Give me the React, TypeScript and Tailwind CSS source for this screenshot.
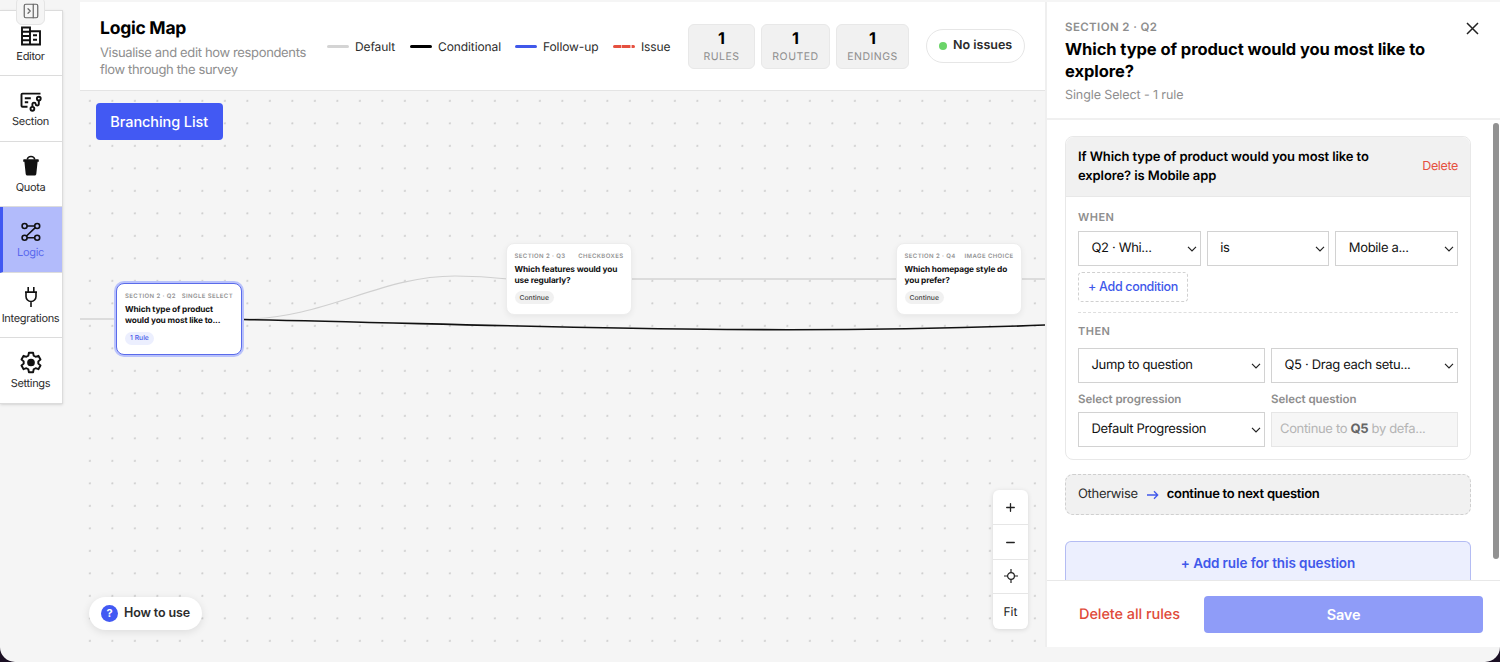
import { Minus, PanelRightClose, Plus } from "lucide-react";
import type { ReactNode } from "react";

function EditorIcon() {
  return (
    <svg width="22" height="20" viewBox="0 0 22 20" fill="none" stroke="#111" strokeWidth="1.9">
      <path d="M2 1.5h8v17H2zM10 5.2h10v13.3H10M2 5.8h8M2 10h8M2 14.2h8" />
      <path d="M13 9.3h4M13 13.7h4" />
    </svg>
  );
}

function SectionIcon() {
  return (
    <svg className="mt-[2px]" width="22" height="20" viewBox="0 0 22 20" fill="none" stroke="#111" strokeWidth="1.9">
      <path d="M20.5 1.6H2.5c-.6 0-1 .4-1 1v11.2c0 .6.4 1 1 1h5" />
      <path d="M4.8 6.2h6M4.8 10.2h3.4" />
      <circle cx="18.8" cy="6.6" r="1.9" />
      <circle cx="12.4" cy="16.8" r="1.9" />
      <path d="M12.4 14.9v-2.7c0-1 .6-1.6 1.6-1.6s1.6.6 1.6 1.5c0 .9.6 1.4 1.5 1.4 1 0 1.7-.6 1.7-1.5V8.6" />
    </svg>
  );
}

function QuotaIcon() {
  return (
    <svg width="18" height="22" viewBox="0 0 18 22" fill="#111">
      <path d="M1.2 5.300C1.200 4.700 1.600 4.300 2.200 4.300h13.600c.6 0 1 .4 1 1v1.500H15.600L14.300 19c-.1.900-.8 1.500-1.700 1.500H5.400c-.9 0-1.600-.6-1.700-1.500L2.400 6.800H1.200z" />
      <path d="M5.200 4.500C5.600 2.500 7 1.500 9 1.500s3.400 1 3.800 3" fill="none" stroke="#111" strokeWidth="1.400" />
    </svg>
  );
}

function LogicIcon() {
  return (
    <svg width="22" height="20" viewBox="0 0 22 20" fill="none" stroke="#111" strokeWidth="1.600">
      <circle cx="4.600" cy="4" r="2.500" />
      <circle cx="17.200" cy="4" r="2.500" />
      <circle cx="4.600" cy="15.800" r="2.500" />
      <circle cx="17.200" cy="15.800" r="2.500" />
      <path d="M7 4h7.700M7 15.800h7.700M15.300 5.700 6.500 14" />
    </svg>
  );
}

function PlugIcon() {
  return (
    <svg width="16" height="22" viewBox="0 0 16 22" fill="none" stroke="#111" strokeWidth="1.600">
      <path d="M5.200 1v5M10.800 1v5M2 6.100h12M3 6.100v4.400a5 5 0 0 0 10 0V6.100M8 15.500V21" />
    </svg>
  );
}

function GearIcon() {
  return (
    <svg width="24" height="24" viewBox="0 0 24 24" fill="none" stroke="#111" strokeWidth="1.900" strokeLinejoin="round">
      <path d="M9.900 2.800h4.200l.6 2.900 1.900 1.100 2.800-1 2.100 3.700-2.200 1.900v2.200l2.200 1.900-2.100 3.700-2.800-1-1.900 1.100-.6 2.900H9.900l-.6-2.900-1.900-1.100-2.800 1-2.100-3.700 2.200-1.900v-2.200L2.500 9.500l2.100-3.700 2.800 1 1.900-1.100z" />
      <circle cx="12" cy="12.500" r="2.900" fill="#111" />
    </svg>
  );
}

const NAV = [
  { label: "Editor", icon: <EditorIcon /> },
  { label: "Section", icon: <SectionIcon /> },
  { label: "Quota", icon: <QuotaIcon /> },
  { label: "Logic", icon: <LogicIcon />, active: true },
  { label: "Integrations", icon: <PlugIcon /> },
  { label: "Settings", icon: <GearIcon /> },
];

function Sidebar() {
  return (
    <aside className="relative w-20 shrink-0 pt-[10px]">
      <nav className="w-[63px] border-t border-r border-b border-[#dcdcdc] bg-white shadow-sm">
        {NAV.map((item) => (
          <div
            key={item.label}
            className={
              item.active
                ? "flex h-[65.4px] flex-col items-center border-b border-l-[3px] border-b-[#dcdcdc] border-l-[#4058f2] bg-[#b2bbfb] pr-[4px] text-[#5a69ee]"
                : "flex h-[65.4px] flex-col items-center border-b border-[#dcdcdc] pr-px text-[#2c2c2c] last:border-b-0"
            }
          >
            <div className="mt-[12.5px] flex h-6 items-center justify-center">{item.icon}</div>
            <span className="mt-[0.5px] text-[11px] leading-4 tracking-[-0.33px]">{item.label}</span>
          </div>
        ))}
      </nav>
      <div className="absolute top-[-3px] left-4 flex h-7 w-[29px] items-center justify-center rounded-md border border-[#e4e4e4] bg-[#f5f5f5]">
        <PanelRightClose size={18} strokeWidth={1.6} className="text-[#666]" />
      </div>
    </aside>
  );
}

function LegendItem({ line, label, width }: { line: string; label: string; width: string }) {
  return (
    <div className={`flex items-center gap-[6px] ${width}`}>
      <span className={line} />
      <span className="pt-px">{label}</span>
    </div>
  );
}

function Stat({ width, label }: { width: string; label: string }) {
  return (
    <div className={`flex h-[45px] flex-col items-center rounded-md border border-[#e8e8e8] bg-[#f1f1f1] pt-[4px] ${width}`}>
      <span className="text-[16px] leading-[18px] font-bold text-black">1</span>
      <span className="mt-[2px] text-[10.5px] leading-[15px] tracking-[0.5px] text-[#8e8e8e]">{label}</span>
    </div>
  );
}

function Header() {
  return (
    <header className="flex h-[89px] border-b border-[#e4e4e4] bg-white pl-5">
      <div className="w-[227px] shrink-0 pt-[15px]">
        <h1 className="text-[17.5px] leading-[24px] font-bold tracking-[-0.25px] text-black">Logic Map</h1>
        <p className="mt-[4px] text-[13px] leading-[16.5px] tracking-[-0.35px] whitespace-nowrap text-[#8e8e8e]">
          Visualise and edit how respondents
          <br />
          flow through the survey
        </p>
      </div>
      <div className="flex h-[88px] w-[361px] shrink-0 items-center text-[12px] tracking-[-0.1px] whitespace-nowrap text-[#2c2c2c]">
        <LegendItem width="w-[83px]" line="h-[3px] w-[22px] rounded-full bg-[#d4d4d4]" label="Default" />
        <LegendItem width="w-[105px]" line="h-[3px] w-[22px] rounded-full bg-black" label="Conditional" />
        <LegendItem width="w-[98px]" line="h-[3px] w-[22px] rounded-full bg-[#4058ea]" label="Follow-up" />
        <LegendItem
          width="w-[60px]"
          line="h-[3px] w-[22px] rounded-full bg-[repeating-linear-gradient(90deg,#e5503f_0_8px,#f5b5ae_8px_9.5px)]"
          label="Issue"
        />
      </div>
      <div className="flex h-[88px] items-center gap-[6px]">
        <Stat width="w-[67px]" label="RULES" />
        <Stat width="w-[69px]" label="ROUTED" />
        <Stat width="w-[73px]" label="ENDINGS" />
      </div>
      <div className="mt-[27px] ml-[17px] flex h-[34px] w-[99px] items-center gap-[6px] rounded-full border border-[#e6e6e6] pl-3 whitespace-nowrap">
        <span className="size-2 rounded-full bg-[#6ad468]" />
        <span className="pt-px text-[12.5px] font-semibold text-[#2c2c2c]">No issues</span>
      </div>
    </header>
  );
}

type NodeProps = {
  position: string;
  section: string;
  kind: string;
  title: ReactNode;
  tag: string;
  selected?: boolean;
};

function MapNode({ position, section, kind, title, tag, selected }: NodeProps) {
  return (
    <div
      className={
        selected
          ? `absolute rounded-lg border-[1.5px] border-[#5a6bea] bg-white px-[8px] pt-[9px] ring-2 ring-[#b9c2fb] ${position}`
          : `absolute rounded-lg border border-[#ededed] bg-white px-[7.5px] pt-[8.5px] shadow-[0_2px_6px_rgba(0,0,0,0.06)] ${position}`
      }
    >
      <div className="flex justify-between text-[6px] leading-[8px] font-semibold tracking-[0.4px] whitespace-nowrap text-[#929292]">
        <span>{section}</span>
        <span>{kind}</span>
      </div>
      <p className="mt-[4px] text-[8.3px] leading-[11px] font-bold tracking-[-0.12px] whitespace-nowrap text-[#111]">{title}</p>
      <span
        className={
          selected
            ? "mt-[4.5px] flex h-[13px] w-fit items-center rounded-full bg-[#eceffe] px-[5px] pt-px text-[6.8px] font-medium text-[#4a5ce8]"
            : "mt-[4.5px] flex h-[13px] w-fit items-center rounded-full bg-[#f1f1f1] px-[5px] pt-px text-[6.8px] font-medium text-[#444]"
        }
      >
        {tag}
      </span>
    </div>
  );
}

function LocateIcon() {
  return (
    <svg width="16" height="16" viewBox="0 0 16 16" fill="none" stroke="#222" strokeWidth="1.2">
      <circle cx="8" cy="8" r="3.4" />
      <path d="M8 1v3.600M8 11.400V15M1 8h3.600M11.400 8H15" />
    </svg>
  );
}

function Canvas() {
  return (
    <div className="relative h-[556px] overflow-hidden bg-[radial-gradient(circle_at_10px_10px,#cfcfcf_0.8px,transparent_1.3px)] bg-[length:22.5px_22.5px]">
      <svg className="absolute top-0 left-0" width="966" height="556" fill="none">
        <path d="M0 228h37M551 188h266M941 188h25" stroke="#d4d4d4" strokeWidth="1.4" />
        <path d="M163 228C245 228 300 185 375 185c20 0 35 1 53 3" stroke="#d0d0d0" strokeWidth="1.2" />
        <path d="M163 228.500C440 234 680 245 966 234" stroke="#111" strokeWidth="1.6" />
      </svg>

      <MapNode
        position="top-[192px] left-[36px] h-[72px] w-[126px]"
        section="SECTION 2 · Q2"
        kind="SINGLE SELECT"
        title={<>Which type of product<br />would you most like to...</>}
        tag="1 Rule"
        selected
      />
      <MapNode
        position="top-[152px] left-[426px] h-[72px] w-[126px]"
        section="SECTION 2 · Q3"
        kind="CHECKBOXES"
        title={<>Which features would you<br />use regularly?</>}
        tag="Continue"
      />
      <MapNode
        position="top-[152px] left-[816px] h-[72px] w-[126px]"
        section="SECTION 2 · Q4"
        kind="IMAGE CHOICE"
        title={<>Which homepage style do<br />you prefer?</>}
        tag="Continue"
      />

      <button className="absolute top-[12px] left-4 h-[37px] w-[126.5px] rounded bg-[#4259f3] text-[14.5px] font-medium tracking-[-0.08px] whitespace-nowrap text-white">
        Branching List
      </button>

      <button className="absolute top-[506px] left-[9px] flex h-[33px] w-[113px] items-center gap-[6px] rounded-full bg-white pl-3 text-[12.5px] font-semibold tracking-[-0.13px] whitespace-nowrap text-[#2c2c2c] shadow-[0_2px_8px_rgba(0,0,0,0.1)]">
        <span className="flex size-[17px] items-center justify-center rounded-full bg-[#4259f3] text-[11px] font-bold text-white">?</span>
        How to use
      </button>

      <div className="absolute top-[399px] left-[913px] grid h-[139px] w-[35px] grid-rows-4 divide-y divide-[#e6e6e6] rounded-md bg-white text-[#222] shadow-[0_1px_5px_rgba(0,0,0,0.12)]">
        <div className="flex items-center justify-center pt-[2px]"><Plus size={13} strokeWidth={2.4} /></div>
        <div className="flex items-center justify-center pt-[2px]"><Minus size={13} strokeWidth={2.4} /></div>
        <div className="flex items-center justify-center"><LocateIcon /></div>
        <div className="flex items-center justify-center text-[12px]">Fit</div>
      </div>
    </div>
  );
}

function SelectBox({ value }: { value: string }) {
  return (
    <div className="flex h-[35px] min-w-0 items-center justify-between border border-[#d2d2d2] bg-white pr-[3px] pl-[12.5px] text-[13px] tracking-[-0.34px] whitespace-nowrap text-[#111]">
      <span className="pt-px">{value}</span>
      <svg width="10" height="6" viewBox="0 0 10 6" fill="none" stroke="#222" strokeWidth="1.200">
        <path d="M1 .8l4 4 4-4" />
      </svg>
    </div>
  );
}

function RuleCard() {
  return (
    <section className="h-[324px] w-[406px] rounded-lg border border-[#e8e8e8] bg-white">
      <div className="flex h-[60px] items-center justify-between rounded-t-lg border-b border-[#e8e8e8] bg-[#f1f1f1] px-3 pt-px">
        <p className="w-[310px] text-[13px] leading-[19.5px] font-semibold tracking-[-0.1px] text-black">
          If Which type of product would you most like to explore? is Mobile app
        </p>
        <span className="pt-px text-[12.5px] tracking-[-0.35px] text-[#e5503f]">Delete</span>
      </div>
      <div className="px-3 pt-[13px]">
        <h3 className="text-[11px] leading-[14px] font-semibold tracking-[0.5px] text-[#8e8e8e]">WHEN</h3>
        <div className="mt-[7px] grid grid-cols-3 gap-[6px]">
          <SelectBox value="Q2 · Whi..." />
          <SelectBox value="is" />
          <SelectBox value="Mobile a..." />
        </div>
        <button className="mt-[6px] flex h-[30px] w-[110px] items-center justify-center rounded border border-dashed border-[#d0d0d0] pt-px text-[12.5px] font-medium tracking-[-0.33px] whitespace-nowrap text-[#4058ea]">
          + Add condition
        </button>
        <div className="mt-[10px] border-t border-dashed border-[#dedede]" />
        <h3 className="mt-[11px] text-[11px] leading-[14px] font-semibold tracking-[0.5px] text-[#8e8e8e]">THEN</h3>
        <div className="mt-[10px] grid grid-cols-2 gap-[6px]">
          <SelectBox value="Jump to question" />
          <SelectBox value="Q5 · Drag each setu..." />
        </div>
        <div className="mt-[9px] grid grid-cols-2 gap-[6px] text-[11.5px] leading-[15px] font-semibold tracking-[-0.05px] text-[#8e8e8e]">
          <span>Select progression</span>
          <span>Select question</span>
        </div>
        <div className="mt-[5px] grid grid-cols-2 gap-[6px]">
          <SelectBox value="Default Progression" />
          <div className="flex h-[35px] min-w-0 items-center border border-[#e6e6e6] bg-[#f6f6f6] pt-px pl-2 text-[13px] tracking-[-0.34px] whitespace-pre text-[#b4b4b4]">
            Continue to <b className="font-bold text-[#666]">Q5</b> by defa...
          </div>
        </div>
      </div>
    </section>
  );
}

function RulePanel() {
  return (
    <aside className="mt-[2px] flex h-[645px] w-[455px] shrink-0 flex-col border-l-2 border-[#efefef] bg-white">
      <div className="flex h-[118px] shrink-0 justify-between border-b-2 border-[#f0f0f0] pr-[21px] pl-[18px]">
        <div className="pt-[17px]">
          <p className="text-[11.5px] leading-[16px] font-semibold tracking-[0.4px] text-[#8e8e8e]">SECTION 2 · Q2</p>
          <h2 className="mt-[4px] w-[370px] text-[16.5px] leading-[21.5px] font-bold tracking-[-0.07px] text-black">
            Which type of product would you most like to explore?
          </h2>
          <p className="mt-[6px] text-[12.5px] leading-[16px] tracking-[-0.1px] text-[#8e8e8e]">Single Select - 1 rule</p>
        </div>
        <svg className="mt-5" width="13" height="13" viewBox="0 0 13 13" fill="none" stroke="#222" strokeWidth="1.500">
          <path d="M1 1l11 11M12 1L1 12" />
        </svg>
      </div>

      <div className="flex min-h-0 flex-1 justify-between overflow-hidden pl-[18px]">
        <div className="pt-4">
          <RuleCard />
          <div className="mt-[14px] flex h-[41px] w-[406px] items-center rounded-lg border border-dashed border-[#cfcfcf] bg-[#f1f1f1] pl-3 text-[13px] whitespace-nowrap">
            <span className="pt-px tracking-[-0.33px] text-[#2c2c2c]">Otherwise</span>
            <svg className="mx-[8px]" width="13" height="10" viewBox="0 0 13 10" fill="none" stroke="#4058ea" strokeWidth="1.300">
              <path d="M1 5h10.500M8 1.300L11.700 5 8 8.700" />
            </svg>
            <span className="pt-px font-semibold tracking-[-0.27px] text-black">continue to next question</span>
          </div>
          <button className="mt-[26px] h-[42px] w-[406px] rounded-t-md border border-b-0 border-[#b4bcf3] bg-[#eceffe] pt-px text-[13.5px] font-semibold tracking-[-0.1px] text-[#4058ea]">
            + Add rule for this question
          </button>
        </div>
        <div className="mt-[3px] mr-px h-[436px] w-[6px] rounded-full bg-[#929292]" />
      </div>

      <footer className="flex h-[67px] shrink-0 items-center border-t-[1px] border-[#e8e8e8] pl-8">
        <span className="w-[125px] pt-px text-[14.5px] font-medium tracking-[-0.07px] whitespace-nowrap text-[#e04a3a]">
          Delete all rules
        </span>
        <button className="h-[37px] w-[279px] rounded bg-[#8f9cf8] pt-px text-[14.5px] font-semibold tracking-[-0.2px] text-white">
          Save
        </button>
      </footer>
    </aside>
  );
}

export default function App() {
  return (
    <div className="h-[662px] w-[1500px] overflow-hidden bg-[#1b1024] font-['Inter',sans-serif] antialiased [text-rendering:geometricPrecision]">
      <div className="flex h-full overflow-hidden rounded-b-[15px] bg-[#f5f5f5]">
        <Sidebar />
        <main className="w-[965px] shrink-0 pt-[2px]">
          <Header />
          <Canvas />
        </main>
        <RulePanel />
      </div>
    </div>
  );
}
